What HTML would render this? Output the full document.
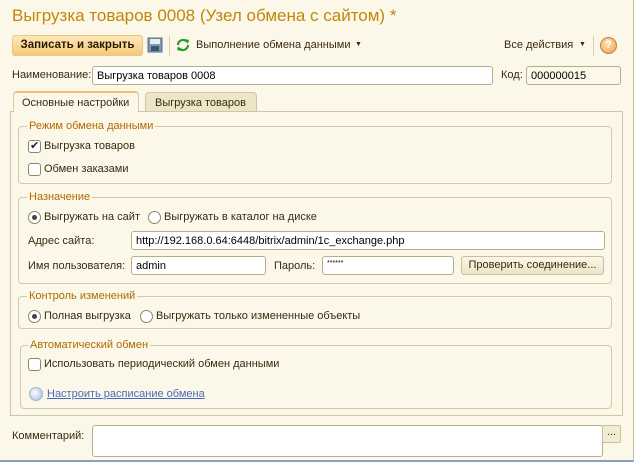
<!DOCTYPE html>
<html><head><meta charset="utf-8"><style>
*{box-sizing:border-box;margin:0;padding:0}
body{width:634px;height:462px;background:#fbf8e9;font-family:"Liberation Sans",sans-serif;font-size:11px;color:#3a2a10;position:relative;overflow:hidden}
.a{position:absolute;white-space:nowrap}
.inp{position:absolute;background:#fff;border:1px solid #b8ad8a;border-radius:3px;padding:2px 4px;font-size:11px;color:#000;line-height:14px}
.grp{position:absolute;border:1px solid #d2c9a8;border-radius:4px}
.leg{position:absolute;background:#fbf8e9;color:#b06a00;padding:0 2px;font-size:11px;line-height:13px}
.cb{position:absolute;width:13px;height:13px;border:1px solid #8d8566;border-radius:3px;background:#fff}
.rb{position:absolute;width:13px;height:13px;border:1px solid #8d8566;border-radius:50%;background:#fff}
.rb.on::after{content:"";position:absolute;left:3px;top:3px;width:5px;height:5px;border-radius:50%;background:#444}
</style></head><body>
<div style="position:absolute;left:0;top:0;width:634px;height:462px;border-right:1px solid #c8c0a0;border-bottom:2px solid #8aa0c0"></div>
<div class="a" style="left:12px;top:6px;font-size:17px;color:#c3850a">Выгрузка товаров 0008 (Узел обмена с сайтом) *</div>

<div class="a" style="left:12px;top:35px;width:131px;height:21px;border:1px solid #e8c884;border-radius:3px;background:linear-gradient(#fde8b8,#f5c97a);font-weight:bold;font-size:11.5px;line-height:19px;text-align:center;color:#2a1a00">Записать и закрыть</div>
<svg class="a" style="left:147px;top:37px" width="16" height="16"><rect x="1" y="1" width="14" height="14" fill="#7d97b4" stroke="#52708e"/><rect x="3" y="2" width="10" height="5" fill="#e6edf4"/><rect x="4" y="9" width="8" height="5" fill="#3d566f"/></svg>
<div class="a" style="left:169px;top:36px;width:1px;height:20px;background:#d8cfb0"></div>
<svg class="a" style="left:175px;top:37px" width="16" height="16"><path d="M3 8a5 5 0 0 1 9-3" stroke="#2a9a2a" stroke-width="2.2" fill="none"/><path d="M13 8a5 5 0 0 1-9 3" stroke="#2a9a2a" stroke-width="2.2" fill="none"/><path d="M10 2l4 1-1 4z" fill="#2a9a2a"/><path d="M6 14l-4-1 1-4z" fill="#2a9a2a"/></svg>
<div class="a" style="left:196px;top:39px">Выполнение обмена данными</div>
<div class="a" style="left:355px;top:41px;font-size:7px">▼</div>
<div class="a" style="left:504px;top:39px">Все действия</div>
<div class="a" style="left:579px;top:41px;font-size:7px">▼</div>
<div class="a" style="left:593px;top:36px;width:1px;height:20px;background:#d8cfb0"></div>
<div class="a" style="left:600px;top:37px;width:17px;height:17px;border-radius:50%;background:radial-gradient(circle at 40% 35%,#ffe0b0,#f0a050);border:1px solid #c08040;text-align:center;font-weight:bold;font-size:11px;line-height:15px;color:#fff">?</div>

<div class="a" style="left:12px;top:69px">Наименование:</div>
<div class="inp" style="left:92px;top:66px;width:401px;height:19px">Выгрузка товаров 0008</div>
<div class="a" style="left:501px;top:69px">Код:</div>
<div class="inp" style="left:526px;top:66px;width:95px;height:19px;background:#fbf8e9">000000015</div>

<div class="a" style="left:10px;top:111px;width:613px;height:305px;border:1px solid #cfc6a4"></div>
<div class="a" style="left:13px;top:91px;width:126px;height:21px;border:1px solid #d8cca0;border-bottom:none;border-radius:4px 4px 0 0;background:#fbf8e9;border-top:2px solid #f0c070;padding:4px 0 0 8px">Основные настройки</div>
<div class="a" style="left:145px;top:92px;width:112px;height:19px;border:1px solid #cfc6a4;border-bottom:none;border-radius:4px 4px 0 0;background:#ede5c8;padding:4px 0 0 9px">Выгрузка товаров</div>

<div class="grp" style="left:18px;top:126px;width:594px;height:58px"></div>
<div class="leg" style="left:27px;top:120px">Режим обмена данными</div>
<div class="cb" style="left:28px;top:140px"><span style="position:absolute;left:1px;top:-2px;font-size:11px;color:#222">✔</span></div>
<div class="a" style="left:44px;top:140px">Выгрузка товаров</div>
<div class="cb" style="left:28px;top:163px"></div>
<div class="a" style="left:44px;top:163px">Обмен заказами</div>

<div class="grp" style="left:18px;top:197px;width:594px;height:87px"></div>
<div class="leg" style="left:27px;top:191px">Назначение</div>
<div class="rb on" style="left:28px;top:211px"></div>
<div class="a" style="left:44px;top:211px">Выгружать на сайт</div>
<div class="rb" style="left:148px;top:211px"></div>
<div class="a" style="left:164px;top:211px">Выгружать в каталог на диске</div>
<div class="a" style="left:28px;top:235px">Адрес сайта:</div>
<div class="inp" style="left:131px;top:231px;width:474px;height:19px">http://192.168.0.64:6448/bitrix/admin/1c_exchange.php</div>
<div class="a" style="left:28px;top:260px">Имя пользователя:</div>
<div class="inp" style="left:131px;top:256px;width:135px;height:19px">admin</div>
<div class="a" style="left:274px;top:260px">Пароль:</div>
<div class="inp" style="left:322px;top:256px;width:132px;height:19px;font-size:7px;line-height:9px">******</div>
<div class="a" style="left:461px;top:256px;width:143px;height:19px;border:1px solid #c8bf9c;border-radius:3px;background:linear-gradient(#fbf7e8,#ede4c6);text-align:center;line-height:17px">Проверить соединение...</div>

<div class="grp" style="left:18px;top:296px;width:594px;height:33px"></div>
<div class="leg" style="left:27px;top:290px">Контроль изменений</div>
<div class="rb on" style="left:28px;top:310px"></div>
<div class="a" style="left:44px;top:310px">Полная выгрузка</div>
<div class="rb" style="left:140px;top:310px"></div>
<div class="a" style="left:156px;top:310px">Выгружать только измененные объекты</div>

<div class="grp" style="left:20px;top:345px;width:592px;height:64px"></div>
<div class="leg" style="left:28px;top:339px">Автоматический обмен</div>
<div class="cb" style="left:28px;top:358px"></div>
<div class="a" style="left:44px;top:358px">Использовать периодический обмен данными</div>
<div class="a" style="left:29px;top:387px;width:14px;height:14px;border-radius:50%;background:radial-gradient(circle at 40% 40%,#fff,#9ab8da);border:1px solid #a0b8d0"></div>
<div class="a" style="left:47px;top:388px;color:#4a6ab8;text-decoration:underline">Настроить расписание обмена</div>

<div class="a" style="left:12px;top:430px">Комментарий:</div>
<div class="inp" style="left:92px;top:425px;width:511px;height:32px"></div>
<div class="a" style="left:602px;top:425px;width:19px;height:18px;border:1px solid #c8bf9c;border-radius:2px;background:#f3ecd3;text-align:center;line-height:12px">...</div>
</body></html>
